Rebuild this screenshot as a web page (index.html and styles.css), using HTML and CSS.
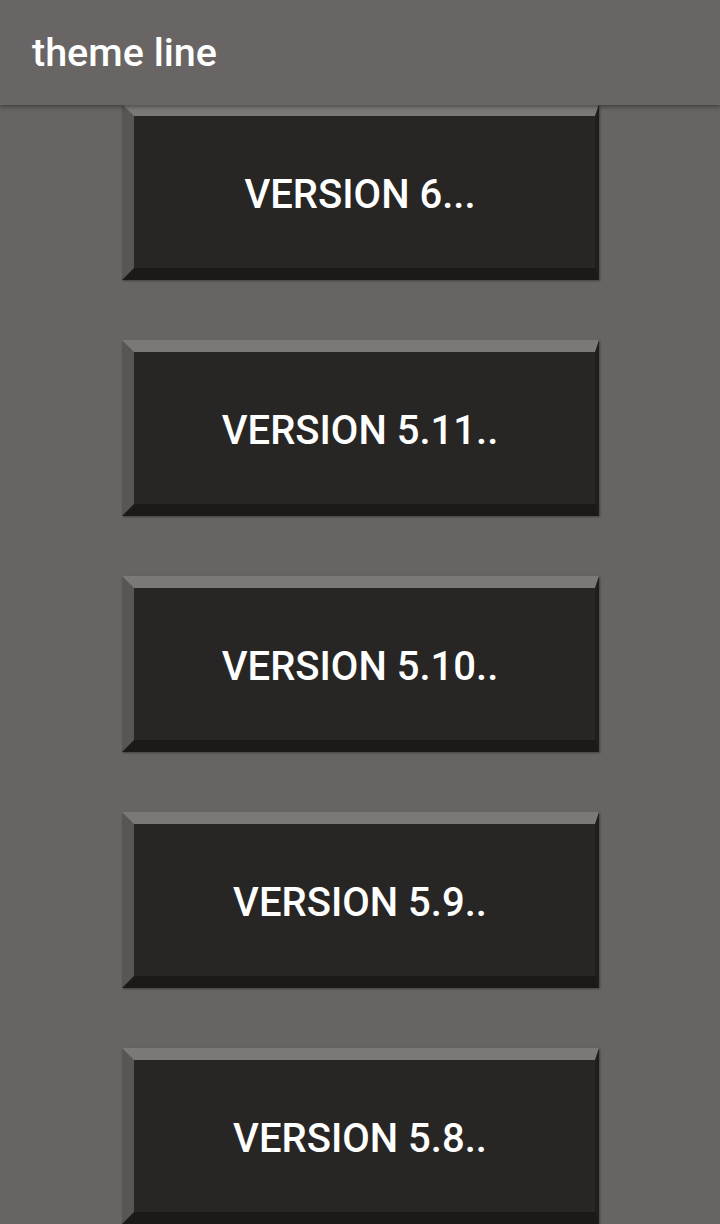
FILE: index.html
```html
<!DOCTYPE html>
<html>
<head>
<meta charset="utf-8">
<link rel="stylesheet" href="styles.css">
</head>
<body>
<header class="appbar"><span class="title">theme line</span></header>
<main class="list">
  <div class="btn">VERSION 6...</div>
  <div class="btn">VERSION 5.11..</div>
  <div class="btn">VERSION 5.10..</div>
  <div class="btn">VERSION 5.9..</div>
  <div class="btn">VERSION 5.8..</div>
</main>
</body>
</html>
```
FILE: styles.css
```css
html, body {
  margin: 0;
  padding: 0;
  background: #676463;
  height: 1224px;
  overflow: hidden;
  font-family: Roboto, "Liberation Sans", sans-serif;
}
.appbar {
  position: relative;
  z-index: 2;
  height: 105px;
  background: #686564;
  box-shadow: 0 2px 4px rgba(0,0,0,0.35);
  display: flex;
  align-items: center;
  padding-left: 32px;
}
.title {
  color: #ffffff;
  font-size: 39.5px;
  font-weight: 500;
}
.list {
  display: flex;
  flex-direction: column;
  align-items: center;
  gap: 60px;
  margin-top: -1px;
}
.btn {
  box-sizing: border-box;
  width: 477px;
  height: 176px;
  background: #272624;
  border-style: solid;
  border-width: 12px 4px 12px 12px;
  border-color: #7a7977 #1f1e1d #1b1a19 #575654;
  box-shadow: 1px 1px 2px rgba(0,0,0,0.35);
  display: flex;
  align-items: center;
  justify-content: center;
  color: #ffffff;
  font-size: 40px;
  font-weight: 500;
  padding-top: 4px;
  padding-right: 8px;
}
```
